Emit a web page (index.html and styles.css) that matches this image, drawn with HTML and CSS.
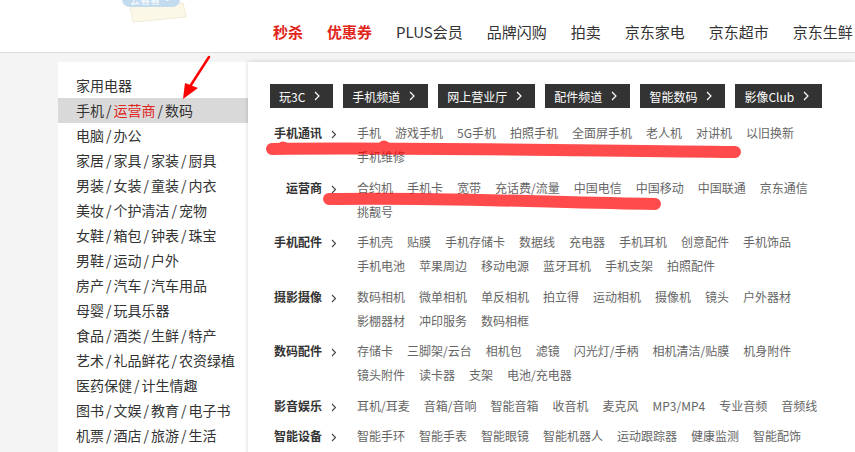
FILE: index.html
```html
<!DOCTYPE html>
<html lang="zh-CN">
<head>
  <meta charset="UTF-8">
  <meta name="viewport" content="width=device-width, initial-scale=1.0">
  <title>京东 - 商品分类</title>
  <link rel="stylesheet" href="styles.css">
</head>
<body>

<div class="page">
  <header class="top">
    <svg class="promo" width="70" height="24" viewBox="0 0 70 24">
      <polygon points="10,6 63,3 66,17 13,22" fill="#fbf8e8" stroke="#f1ecd6" stroke-width="1"/>
      <rect x="2" y="-8" width="58" height="15" rx="7.5" fill="#c3dbef"/>
      <text x="10" y="4" font-size="10" fill="#fff" font-family="Noto Sans CJK SC, sans-serif">去看看 ·</text>
    </svg>
    <ul class="nav">
      <li class="hot">秒杀</li>
      <li class="hot">优惠券</li>
      <li>PLUS会员</li>
      <li>品牌闪购</li>
      <li>拍卖</li>
      <li>京东家电</li>
      <li>京东超市</li>
      <li>京东生鲜</li>
    </ul>
  </header>

  <div class="main">
    <ul class="cate-menu">
      <li>家用电器</li>
      <li class="on">手机<span class="sep">/</span><span class="red">运营商</span><span class="sep">/</span>数码</li>
      <li>电脑<span class="sep">/</span>办公</li>
      <li>家居<span class="sep">/</span>家具<span class="sep">/</span>家装<span class="sep">/</span>厨具</li>
      <li>男装<span class="sep">/</span>女装<span class="sep">/</span>童装<span class="sep">/</span>内衣</li>
      <li>美妆<span class="sep">/</span>个护清洁<span class="sep">/</span>宠物</li>
      <li>女鞋<span class="sep">/</span>箱包<span class="sep">/</span>钟表<span class="sep">/</span>珠宝</li>
      <li>男鞋<span class="sep">/</span>运动<span class="sep">/</span>户外</li>
      <li>房产<span class="sep">/</span>汽车<span class="sep">/</span>汽车用品</li>
      <li>母婴<span class="sep">/</span>玩具乐器</li>
      <li>食品<span class="sep">/</span>酒类<span class="sep">/</span>生鲜<span class="sep">/</span>特产</li>
      <li>艺术<span class="sep">/</span>礼品鲜花<span class="sep">/</span>农资绿植</li>
      <li>医药保健<span class="sep">/</span>计生情趣</li>
      <li>图书<span class="sep">/</span>文娱<span class="sep">/</span>教育<span class="sep">/</span>电子书</li>
      <li>机票<span class="sep">/</span>酒店<span class="sep">/</span>旅游<span class="sep">/</span>生活</li>
    </ul>

    <div class="cate-pop">
      <div class="channels">
        <a href="#">玩3C<svg width="6" height="10" viewBox="0 0 6 10"><path d="M1 1 L5 5 L1 9" fill="none" stroke="#fff" stroke-width="1.2"/></svg></a>
        <a href="#">手机频道<svg width="6" height="10" viewBox="0 0 6 10"><path d="M1 1 L5 5 L1 9" fill="none" stroke="#fff" stroke-width="1.2"/></svg></a>
        <a href="#">网上营业厅<svg width="6" height="10" viewBox="0 0 6 10"><path d="M1 1 L5 5 L1 9" fill="none" stroke="#fff" stroke-width="1.2"/></svg></a>
        <a href="#">配件频道<svg width="6" height="10" viewBox="0 0 6 10"><path d="M1 1 L5 5 L1 9" fill="none" stroke="#fff" stroke-width="1.2"/></svg></a>
        <a href="#">智能数码<svg width="6" height="10" viewBox="0 0 6 10"><path d="M1 1 L5 5 L1 9" fill="none" stroke="#fff" stroke-width="1.2"/></svg></a>
        <a href="#">影像Club<svg width="6" height="10" viewBox="0 0 6 10"><path d="M1 1 L5 5 L1 9" fill="none" stroke="#fff" stroke-width="1.2"/></svg></a>
      </div>

      <dl class="cate-row">
        <dt>手机通讯<svg width="6" height="9" viewBox="0 0 6 9"><path d="M1 1 L4.5 4.5 L1 8" fill="none" stroke="#444" stroke-width="1.1"/></svg></dt>
        <dd>
          <a href="#">手机</a><a href="#">游戏手机</a><a href="#">5G手机</a><a href="#">拍照手机</a><a href="#">全面屏手机</a><a href="#">老人机</a><a href="#">对讲机</a><a href="#">以旧换新</a><a href="#">手机维修</a>
        </dd>
      </dl>
      <dl class="cate-row">
        <dt>运营商<svg width="6" height="9" viewBox="0 0 6 9"><path d="M1 1 L4.5 4.5 L1 8" fill="none" stroke="#444" stroke-width="1.1"/></svg></dt>
        <dd>
          <a href="#">合约机</a><a href="#">手机卡</a><a href="#">宽带</a><a href="#">充话费/流量</a><a href="#">中国电信</a><a href="#">中国移动</a><a href="#">中国联通</a><a href="#">京东通信</a><a href="#">挑靓号</a>
        </dd>
      </dl>
      <dl class="cate-row">
        <dt>手机配件<svg width="6" height="9" viewBox="0 0 6 9"><path d="M1 1 L4.5 4.5 L1 8" fill="none" stroke="#444" stroke-width="1.1"/></svg></dt>
        <dd>
          <a href="#">手机壳</a><a href="#">贴膜</a><a href="#">手机存储卡</a><a href="#">数据线</a><a href="#">充电器</a><a href="#">手机耳机</a><a href="#">创意配件</a><a href="#">手机饰品</a><a href="#">手机电池</a><a href="#">苹果周边</a><a href="#">移动电源</a><a href="#">蓝牙耳机</a><a href="#">手机支架</a><a href="#">拍照配件</a>
        </dd>
      </dl>
      <dl class="cate-row">
        <dt>摄影摄像<svg width="6" height="9" viewBox="0 0 6 9"><path d="M1 1 L4.5 4.5 L1 8" fill="none" stroke="#444" stroke-width="1.1"/></svg></dt>
        <dd>
          <a href="#">数码相机</a><a href="#">微单相机</a><a href="#">单反相机</a><a href="#">拍立得</a><a href="#">运动相机</a><a href="#">摄像机</a><a href="#">镜头</a><a href="#">户外器材</a><a href="#">影棚器材</a><a href="#">冲印服务</a><a href="#">数码相框</a>
        </dd>
      </dl>
      <dl class="cate-row">
        <dt>数码配件<svg width="6" height="9" viewBox="0 0 6 9"><path d="M1 1 L4.5 4.5 L1 8" fill="none" stroke="#444" stroke-width="1.1"/></svg></dt>
        <dd>
          <a href="#">存储卡</a><a href="#">三脚架/云台</a><a href="#">相机包</a><a href="#">滤镜</a><a href="#">闪光灯/手柄</a><a href="#">相机清洁/贴膜</a><a href="#">机身附件</a><a href="#">镜头附件</a><a href="#">读卡器</a><a href="#">支架</a><a href="#">电池/充电器</a>
        </dd>
      </dl>
      <dl class="cate-row">
        <dt>影音娱乐<svg width="6" height="9" viewBox="0 0 6 9"><path d="M1 1 L4.5 4.5 L1 8" fill="none" stroke="#444" stroke-width="1.1"/></svg></dt>
        <dd>
          <a href="#">耳机/耳麦</a><a href="#">音箱/音响</a><a href="#">智能音箱</a><a href="#">收音机</a><a href="#">麦克风</a><a href="#">MP3/MP4</a><a href="#">专业音频</a><a href="#">音频线</a>
        </dd>
      </dl>
      <dl class="cate-row">
        <dt>智能设备<svg width="6" height="9" viewBox="0 0 6 9"><path d="M1 1 L4.5 4.5 L1 8" fill="none" stroke="#444" stroke-width="1.1"/></svg></dt>
        <dd>
          <a href="#">智能手环</a><a href="#">智能手表</a><a href="#">智能眼镜</a><a href="#">智能机器人</a><a href="#">运动跟踪器</a><a href="#">健康监测</a><a href="#">智能配饰</a><a href="#">智能家居</a><a href="#">体感车</a><a href="#">其他配件</a>
        </dd>
      </dl>
    </div>
  </div>
</div>

<!-- hand-drawn annotation marks on top of the screenshot -->
<svg class="marks" width="855" height="452" viewBox="0 0 855 452">
  <g fill="#ff0000" stroke="#ff0000" opacity="0.7">
    <path d="M272 149 C 400 147, 600 151, 735 152" fill="none" stroke-width="12" stroke-linecap="round"/>
    <circle cx="283" cy="148" r="6.5" stroke="none"/>
    <circle cx="384" cy="147" r="6.5" stroke="none"/>
    <path d="M329 199 C 450 197, 560 203, 655 204" fill="none" stroke-width="12" stroke-linecap="round"/>
  </g>
  <line x1="209" y1="57" x2="189" y2="88" stroke="#ff0000" stroke-width="2.5" stroke-linecap="round"/>
  <polygon points="185,83 198,88 183,99" fill="#ff0000"/>
</svg>

</body>
</html>
```

FILE: styles.css
```css
body {
  margin: 0;
  font-family: "Noto Sans CJK SC", sans-serif;
  color: #333;
  background-color: #f4f4f4;
}

.page {
  height: 100vh;
  overflow: hidden;
}

.top {
  display: flex;
  height: 52px;
  background-color: #fff;
  border-bottom: 1px solid #ddd;
}

.promo {
  flex: none;
  margin-left: 120px;
}

.nav {
  display: flex;
  margin: 0 0 0 71px;
  padding: 21px 0 0;
  list-style: none;
  white-space: nowrap;
}

.nav li {
  padding: 0 12px;
  font-size: 15px;
  line-height: 22px;
}

.nav .hot {
  color: #e1251b;
  font-weight: bold;
}

.main {
  display: flex;
  padding: 9px 0 0 58px;
}

/* left category menu */
.cate-menu {
  flex: none;
  width: 190px;
  margin: 0;
  padding: 11px 0 0;
  list-style: none;
  background-color: #fff;
}

.cate-menu li {
  height: 25px;
  padding-left: 18px;
  font-size: 14px;
  line-height: 25px;
}

.cate-menu li.on {
  background-color: #d9d9d9;
}

.cate-menu .sep {
  padding: 0 2px;
}

.cate-menu .red {
  color: #e1251b;
}

/* popup on the right */
.cate-pop {
  position: relative;
  flex: 1;
  padding: 22px 0 0 22px;
  background-color: #fff;
  box-shadow: 0 0 4px rgba(0, 0, 0, 0.18);
}

.channels {
  display: flex;
  gap: 10px;
  margin-bottom: 13px;
}

.channels a {
  display: flex;
  align-items: center;
  height: 24px;
  padding: 0 13px 0 9px;
  background-color: #333;
  color: #fff;
  font-size: 12px;
  text-decoration: none;
}

.channels svg {
  margin-left: 9px;
}

.cate-row {
  display: flex;
  margin: 0;
  padding-bottom: 6.5px;
}

.cate-row dt {
  flex: none;
  width: 67px;
  font-size: 12px;
  font-weight: bold;
  line-height: 24px;
  text-align: right;
}

.cate-row dt svg {
  margin-left: 9px;
  vertical-align: -1px;
}

.cate-row dd {
  display: flex;
  flex-wrap: wrap;
  column-gap: 14px;
  width: 480px;
  margin: 0 0 0 20px;
}

.cate-row dd a {
  color: #666;
  font-size: 12px;
  line-height: 24px;
  text-decoration: none;
  white-space: nowrap;
}

.marks {
  position: absolute;
  top: 0;
  left: 0;
  pointer-events: none;
}
```
